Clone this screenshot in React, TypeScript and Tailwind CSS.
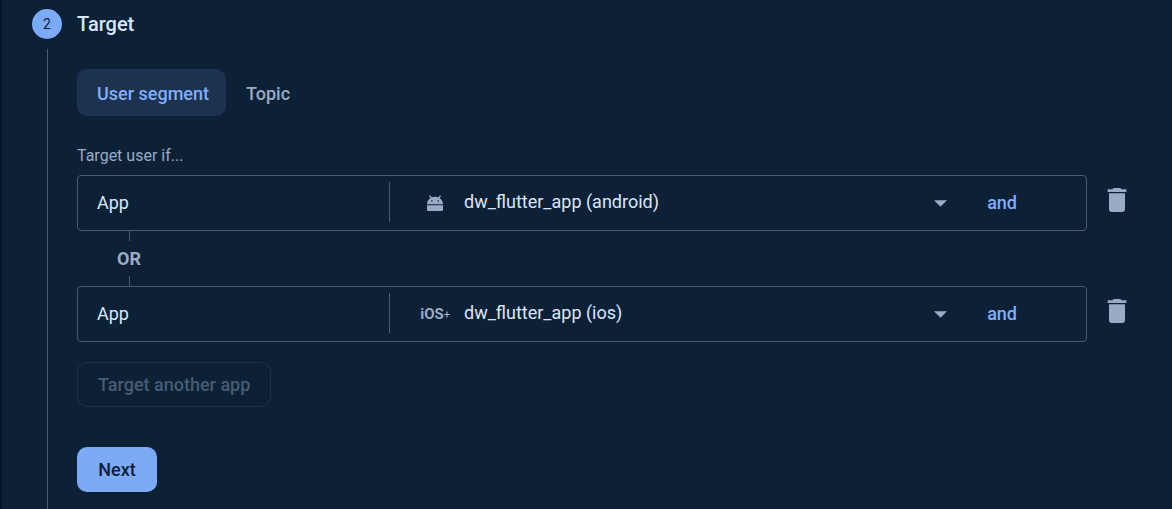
import { useState } from "react";
import type { ReactNode } from "react";

function AndroidIcon() {
  return (
    <svg width="16" height="16" viewBox="0 0 16 16" fill="currentColor" aria-hidden="true">
      <path
        fillRule="evenodd"
        d="M0 9.2C0 6.4 1.4 4.2 3.5 2.9L1.9.9 2.8.2 4.7 2.3C5.7 1.9 6.8 1.7 8 1.7s2.3.2 3.3.6L13.2.2l.9.7-1.6 2C14.6 4.2 16 6.4 16 9.2zM4.2 5.2v1.2h1.3V5.2zM10.5 5.2v1.2h1.3V5.2z"
      />
      <path d="M0 10.2h16v5q0 .8-.8.8H.8Q0 16 0 15.2z" />
    </svg>
  );
}

function IosMark() {
  return (
    <span className="flex items-center text-[15px] leading-4 font-bold" aria-hidden="true">
      iOS
      <svg width="6" height="7" viewBox="0 0 6 7" stroke="currentColor" strokeWidth="1.2">
        <path d="M0 3.5h6M3 .5v6" />
      </svg>
    </span>
  );
}

function TrashIcon() {
  return (
    <svg width="32" height="32" viewBox="0 0 24 24" fill="currentColor" aria-hidden="true">
      <path d="M6 19c0 1.1.9 2 2 2h8c1.1 0 2-.9 2-2V7H6v12zM19 4h-3.5l-1-1h-5l-1 1H5v2h14V4z" />
    </svg>
  );
}

type RowProps = { id: string; value: string; icon: ReactNode };

function TargetRow({ id, value, icon }: RowProps) {
  return (
    <div className="flex items-center gap-3.5">
      <div className="flex h-14 min-w-0 flex-1 items-center rounded border border-[#475b73]">
        <label htmlFor={id} className="w-[311px] shrink-0 pl-[19px] text-lg text-[#d9e6ff]">
          App
        </label>
        <span className="mb-0.5 h-10 w-px shrink-0 bg-[#475b73]" />
        <div className="relative ml-[30px] flex min-w-0 flex-1 items-center">
          <span className="pointer-events-none absolute left-0 flex w-[30px] justify-center text-[#9aabc6]">
            {icon}
          </span>
          <select
            id={id}
            className="h-12 w-full cursor-pointer appearance-none bg-transparent pr-8 pb-0.5 pl-11 text-lg text-[#d9e6ff] outline-none"
          >
            <option>{value}</option>
          </select>
          <svg
            className="pointer-events-none absolute right-2"
            width="13"
            height="7"
            viewBox="0 0 14 7"
            fill="#9aabc6"
            aria-hidden="true"
          >
            <path d="M0 0h14L7 7z" />
          </svg>
        </div>
        <button type="button" className="mr-[69px] ml-8 text-lg font-medium text-[#82aefc]">
          and
        </button>
      </div>
      <button type="button" aria-label="Delete app" className="mb-1.5 text-[#9aabc6]">
        <TrashIcon />
      </button>
    </div>
  );
}

const tabs = ["User segment", "Topic"];

export default function App() {
  const [active, setActive] = useState(tabs[0]);

  return (
    <main className="flex min-h-screen border-l-2 border-[#041527] bg-[#0c2136] pl-[30px] font-['Roboto',sans-serif]">
      <div className="flex w-[30px] shrink-0 flex-col pt-[9px]">
        <span className="flex h-[30px] items-center justify-center rounded-full bg-[#7baaf7] text-sm text-[#0c2136]">
          2
        </span>
        <span className="mt-2.5 ml-[15px] w-px flex-1 bg-[#475b73]" />
      </div>

      <section className="ml-[15px] min-w-0 flex-1 pr-[39px] pb-4">
        <h2 className="pt-2.5 text-xl leading-7 font-medium text-[#d9e6ff]">Target</h2>

        <div className="mt-[31px] flex" role="tablist">
          {tabs.map((tab) => (
            <button
              key={tab}
              type="button"
              role="tab"
              aria-selected={tab === active}
              onClick={() => setActive(tab)}
              className={
                tab === active
                  ? "h-[47px] rounded-[10px] bg-[#1c324e] pt-0.5 pr-[17px] pl-5 text-lg font-medium text-[#82aefc]"
                  : "h-[47px] rounded-[10px] pt-0.5 pr-[17px] pl-5 text-lg font-medium text-[#9aabc6]"
              }
            >
              {tab}
            </button>
          ))}
        </div>

        <p className="mt-7 mb-[7px] text-base text-[#9aabc6]">Target user if...</p>

        <TargetRow id="app-android" value="dw_flutter_app (android)" icon={<AndroidIcon />} />
        <div className="ml-10 flex w-6 flex-col items-center">
          <span className="h-2.5 w-px bg-[#475b73]" />
          <span className="text-lg leading-[35px] font-bold text-[#9aabc6]">OR</span>
          <span className="h-2.5 w-px bg-[#475b73]" />
        </div>
        <TargetRow id="app-ios" value="dw_flutter_app (ios)" icon={<IosMark />} />

        <button
          type="button"
          disabled
          className="mt-5 block h-[45px] rounded-[10px] border border-[#1e3148] px-5 text-lg font-medium text-[#475b73]"
        >
          Target another app
        </button>
        <button
          type="button"
          className="mt-10 block h-[45px] min-w-20 rounded-[10px] bg-[#7baaf7] px-5 text-lg font-medium text-[#0c2136]"
        >
          Next
        </button>
      </section>
    </main>
  );
}
